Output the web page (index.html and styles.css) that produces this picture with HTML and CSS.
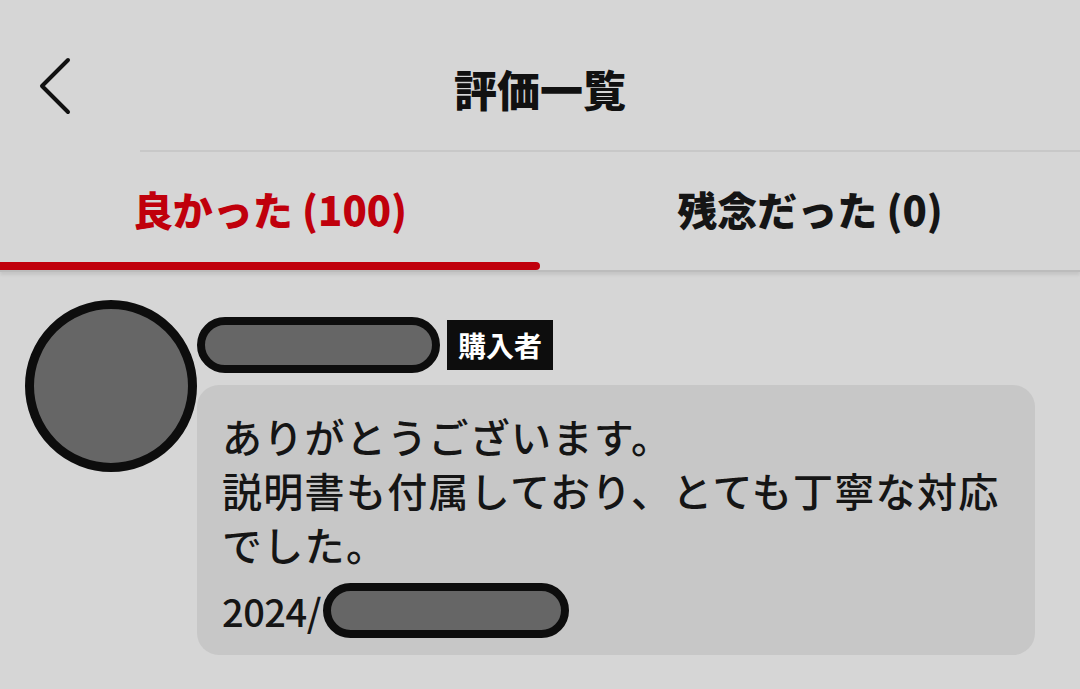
FILE: index.html
```html
<!DOCTYPE html>
<html lang="ja">
<head>
<meta charset="utf-8">
<link rel="stylesheet" href="styles.css">
</head>
<body>
<div class="page">
  <header class="header">
    <svg class="back" width="40" height="60" viewBox="0 0 40 60">
      <path d="M30 4 L4 30 L30 56" fill="none" stroke="#111" stroke-width="4" stroke-linecap="round" stroke-linejoin="round"/>
    </svg>
    <h1 class="title">評価一覧</h1>
  </header>
  <div class="sep"></div>
  <nav class="tabs">
    <div class="tab active">良かった (100)</div>
    <div class="tab">残念だった (0)</div>
  </nav>
  <section class="review">
    <div class="avatar"></div>
    <div class="main">
      <div class="name-row">
        <div class="pill name"></div>
        <div class="badge">購入者</div>
      </div>
      <div class="bubble">
        <p class="comment">ありがとうございます。<br>説明書も付属しており、とても丁寧な対応<br>でした。</p>
        <div class="date-row">
          <span class="date">2024/</span>
          <div class="pill datepill"></div>
        </div>
      </div>
    </div>
  </section>
</div>
</body>
</html>
```

FILE: styles.css
```css
* { box-sizing: border-box; }
html, body {
  margin: 0;
  padding: 0;
  background: #d6d6d6;
}
body {
  width: 1080px;
  height: 689px;
  overflow: hidden;
  font-family: "Noto Sans CJK JP", "Noto Sans", sans-serif;
  color: #111;
}
.page {
  display: flex;
  flex-direction: column;
}
.header {
  position: relative;
  height: 150px;
  display: flex;
  align-items: center;
  justify-content: center;
}
.back {
  position: absolute;
  left: 38px;
  top: 56px;
}
.title {
  margin: 0;
  font-size: 43px;
  font-weight: 900;
  letter-spacing: 0;
  padding-top: 26px;
  line-height: 1;
}
.sep {
  height: 2px;
  margin-left: 140px;
  background: #c8c8c8;
}
.tabs {
  display: flex;
  height: 120px;
  border-bottom: 2px solid #bcbcbc;
  box-shadow: 0 3px 3px rgba(0,0,0,0.08);
}
.tab {
  flex: 1;
  display: flex;
  align-items: center;
  justify-content: center;
  font-size: 40px;
  font-weight: 900;
  color: #151515;
  padding-bottom: 4px;
  position: relative;
}
.tab.active {
  color: #c0000c;
}
.tab.active::after {
  content: "";
  position: absolute;
  left: 0;
  right: 0;
  bottom: 0;
  height: 8px;
  border-radius: 0 4px 4px 0;
  background: #c0000c;
}
.review {
  display: flex;
  padding: 28px 45px 0 25px;
}
.avatar {
  width: 172px;
  height: 172px;
  flex: none;
  border-radius: 50%;
  border: 9px solid #0d0d0d;
  background: #666;
}
.main {
  flex: 1;
  display: flex;
  flex-direction: column;
  padding-top: 17px;
}
.name-row {
  display: flex;
  align-items: center;
  gap: 7px;
}
.pill {
  border: 8px solid #0d0d0d;
  background: #666;
  border-radius: 30px;
}
.name {
  width: 243px;
  height: 56px;
}
.badge {
  background: #0d0d0d;
  color: #fff;
  font-size: 28px;
  font-weight: 700;
  height: 50px;
  padding: 0 11px;
  display: flex;
  align-items: center;
}
.bubble {
  margin-top: 12px;
  background: #c7c7c7;
  border-radius: 22px;
  padding: 24px 25px 15px 25px;
  height: 270px;
}
.comment {
  margin: 0;
  font-size: 40px;
  line-height: 54px;
  font-weight: 500;
  color: #151515;
  letter-spacing: 1.3px;
}
.date-row {
  display: flex;
  align-items: center;
  margin-top: 12px;
}
.date {
  font-size: 38px;
  font-weight: 500;
  color: #151515;
  letter-spacing: -0.5px;
}
.datepill {
  width: 246px;
  height: 55px;
  margin-left: 2px;
}
```
